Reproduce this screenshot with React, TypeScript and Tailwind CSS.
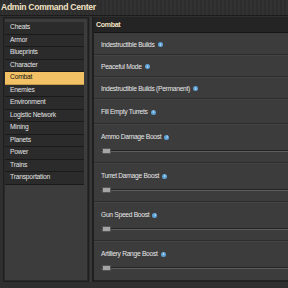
const categories = [
  "Cheats",
  "Armor",
  "Blueprints",
  "Character",
  "Combat",
  "Enemies",
  "Environment",
  "Logistic Network",
  "Mining",
  "Planets",
  "Power",
  "Trains",
  "Transportation",
];

const toggles = [
  "Indestructible Builds",
  "Peaceful Mode",
  "Indestructible Builds (Permanent)",
  "Fill Empty Turrets",
];

const sliders = [
  "Ammo Damage Boost",
  "Turret Damage Boost",
  "Gun Speed Boost",
  "Artillery Range Boost",
];

const Info = () => (
  <span className="inline-flex items-center justify-center w-[5px] h-[5px] rounded-full bg-[#5ea4d8] ml-[3px] text-[4px] leading-none text-[#e8f4ff] font-bold">
    i
  </span>
);

const Label = ({ text }: { text: string }) => (
  <div className="flex items-center text-[6.7px] tracking-[-0.3px] leading-none text-[#e8e8e8]">
    {text}
    <Info />
  </div>
);

export default function App() {
  return (
    <div
      className="w-[288px] h-[288px] bg-[#2f2f2f] flex flex-col overflow-hidden"
      style={{ fontFamily: '"Liberation Sans", Arial, sans-serif' }}
    >
      <div className="h-[16px] shrink-0 flex items-center bg-[repeating-linear-gradient(90deg,#2d2d2d_0px,#2d2d2d_2px,#323232_2px,#323232_4px)] border-b border-[#1c1c1c]">
        <span className="bg-[#2f2f2f] pr-[4px] pl-[1px] text-[8.6px] font-bold tracking-[-0.3px] text-[#f3e3c4] leading-none">
          Admin Command Center
        </span>
      </div>

      <div className="flex h-[266px] shrink-0 pt-[1px]">
        {/* left list */}
        <div className="w-[86px] ml-[3px] bg-[#3c3c3c] border border-[#1f1f1f] shadow-[inset_0_0_0_1px_#2a2a2a] pt-[4px] pl-[1px] pr-[4px] flex flex-col">
          {categories.map((c) => (
            <div
              key={c}
              className={`h-[12.5px] flex items-center pl-[5px] text-[6.7px] tracking-[-0.2px] leading-none border-b ${
                c === "Combat"
                  ? "bg-[#f2c165] text-[#111] border-[#c79a45]"
                  : "bg-[#2b2b2b] text-[#e4e4e4] border-[#1a1a1a]"
              }`}
            >
              {c}
            </div>
          ))}
        </div>

        <div className="w-[3px] ml-[1px] bg-[#383838] border-r border-[#1f1f1f]" />

        {/* right panel */}
        <div className="flex-1 flex flex-col border-l border-[#1f1f1f]">
          <div className="h-[16px] shrink-0 bg-[#242424] border-b border-[#141414] flex items-center pl-[2px] text-[7px] font-bold tracking-[-0.3px] text-[#f3e3c4] leading-none">
            Combat
          </div>
          <div className="flex-1 bg-[#3c3c3c] flex flex-col border-b-2 border-[#222]">
            {toggles.map((t, i) => (
              <div
                key={t}
                className={`${i === 3 ? "h-[25px]" : "h-[22px]"} shrink-0 flex items-center pl-[7px] pt-[3px] border-b border-[#2c2c2c] shadow-[0_1px_0_#444]`}
              >
                <Label text={t} />
              </div>
            ))}
            {sliders.map((s, i) => (
              <div
                key={s}
                className={`h-[39px] shrink-0 flex flex-col pl-[7px] pt-[10px] ${
                  i < 3 ? "border-b border-[#2c2c2c] shadow-[0_1px_0_#444]" : ""
                }`}
              >
                <Label text={s} />
                <div className="relative mt-[7px] h-[6px]">
                  <div className="absolute left-0 right-0 top-[2px] h-[2px] bg-[#242424] border-b border-[#5d5d5d]" />
                  <div className="absolute left-[1px] top-0 w-[9px] h-[6px] bg-[#a5a5a5] border border-[#555] rounded-[1px]" />
                </div>
              </div>
            ))}
          </div>
        </div>
      </div>
    </div>
  );
}
